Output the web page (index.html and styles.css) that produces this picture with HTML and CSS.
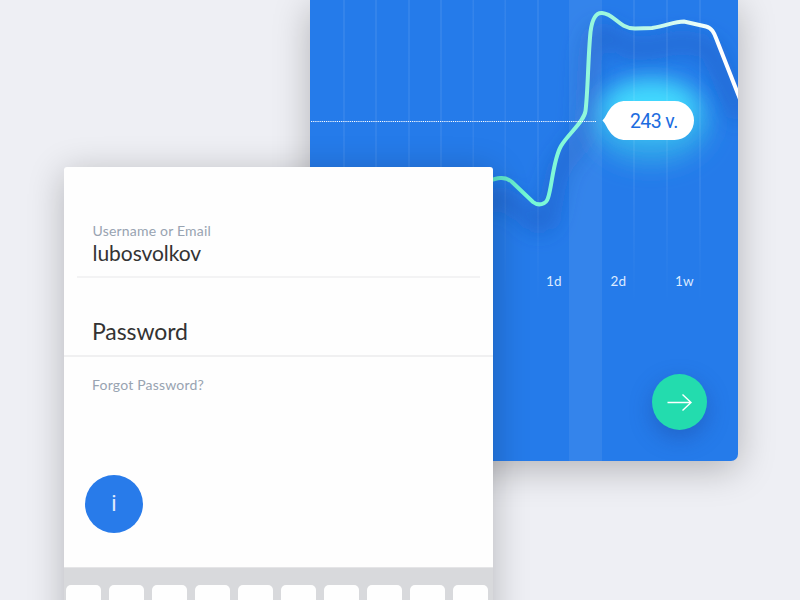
FILE: index.html
```html
<!DOCTYPE html>
<html lang="en">
<head>
<meta charset="utf-8">
<title>Sign in</title>
<link rel="stylesheet" href="styles.css">
</head>
<body>
<main class="stage">
  <section class="chart-card">
    <svg class="chart" width="428" height="461" viewBox="310 0 428 461">
      <defs>
        <linearGradient id="stroke" gradientUnits="userSpaceOnUse" x1="480" y1="0" x2="720" y2="0">
          <stop offset="0" stop-color="#4fd8c0"/>
          <stop offset=".2" stop-color="#74f8d5"/>
          <stop offset=".35" stop-color="#84f9d9"/>
          <stop offset=".6" stop-color="#a8f6e0"/>
          <stop offset=".8" stop-color="#d4fbf0"/>
          <stop offset="1" stop-color="#fff"/>
        </linearGradient>
        <linearGradient id="fade" gradientUnits="userSpaceOnUse" x1="0" y1="0" x2="0" y2="305">
          <stop offset="0" stop-color="#fff" stop-opacity=".07"/>
          <stop offset=".6" stop-color="#fff" stop-opacity=".06"/>
          <stop offset="1" stop-color="#fff" stop-opacity="0"/>
        </linearGradient>
        <filter id="soft" filterUnits="userSpaceOnUse" x="280" y="-60" width="520" height="400"><feGaussianBlur stdDeviation="11"/></filter>
        <filter id="halo" filterUnits="userSpaceOnUse" x="540" y="20" width="240" height="220"><feGaussianBlur stdDeviation="12"/></filter>
      </defs>
      <path transform="translate(0 20)" d="M480 184C493 180 503 174 512 182L533 202C538 206 546 205 548 198C552 187 553 160 561 146C568 134 584 122 585.500 111C588 91 588 57 590.500 32C592 20 596 12.500 602 13C615 14 618 28 635 28.500L652 28C666 26 674 21.500 684 21.500L706 26.500C712 28 714 33 716 38L740 99" fill="none" stroke="#1c50b0" stroke-opacity=".6" stroke-width="12" filter="url(#soft)"/>
      <ellipse cx="651" cy="124" rx="59" ry="40" fill="#32a5ea" filter="url(#halo)"/>
      <ellipse cx="651" cy="107" rx="46" ry="26" fill="#42daff" filter="url(#halo)"/>
      <rect x="569" y="0" width="33" height="461" fill="#fff" opacity=".07"/>
      <g fill="url(#fade)">
        <rect x="343" y="0" width="2" height="305"/>
        <rect x="375" y="0" width="2" height="305"/>
        <rect x="408" y="0" width="2" height="305"/>
        <rect x="440" y="0" width="2" height="305"/>
        <rect x="472.500" y="0" width="1.500" height="305"/>
        <rect x="504.500" y="0" width="1.500" height="305"/>
        <rect x="537" y="0" width="2" height="305"/>
        <rect x="633" y="0" width="2" height="305"/>
        <rect x="666" y="0" width="2" height="305"/>
        <rect x="699" y="0" width="2" height="305"/>
      </g>
      <path d="M480 184C493 180 503 174 512 182L533 202C538 206 546 205 548 198C552 187 553 160 561 146C568 134 584 122 585.500 111C588 91 588 57 590.500 32C592 20 596 12.500 602 13C615 14 618 28 635 28.500L652 28C666 26 674 21.500 684 21.500L706 26.500C712 28 714 33 716 38L740 99" fill="none" stroke="url(#stroke)" stroke-width="4"/>
      <path d="M311 121.500H596" stroke="#fff" stroke-width="1.200" stroke-dasharray="1.200 0.950"/>
    </svg>
    <div class="value">
      <svg class="value-shape" width="92" height="39" viewBox="0 0 92 39"><path d="M0.500 19.500C4 16 5 11.500 8 8C12 2.500 17 0 24 0H72.500A19.500 19.500 0 0 1 72.500 39H24C17 39 12 36.500 8 31C5 27.500 4 23 0.500 19.500Z" fill="#fff"/></svg>
      <span class="value-text">243 v.</span>
    </div>
    <div class="ranges"><span>1d</span><span>2d</span><span>1w</span></div>
    <button class="next" aria-label="Next">
      <svg width="26" height="18" viewBox="0 0 26 18" fill="none" stroke="#fff" stroke-width="1.400"><path d="M.5 9.500H24M15.500 1.500L24 9.500L15.500 17.500"/></svg>
    </button>
  </section>

  <section class="login-card">
    <div class="field user">
      <div class="label">Username or Email</div>
      <div class="username">lubosvolkov</div>
    </div>
    <div class="field password">Password</div>
    <div class="forgot">Forgot Password?</div>
    <div class="info">i</div>
    <div class="keyboard">
      <i class="key"></i><i class="key"></i><i class="key"></i><i class="key"></i><i class="key"></i><i class="key"></i><i class="key"></i><i class="key"></i><i class="key"></i><i class="key"></i>
    </div>
  </section>
</main>
</body>
</html>
```

FILE: styles.css
```css
* { box-sizing: border-box; }
body { margin: 0; font-family: Lato, "Liberation Sans", sans-serif; }
.stage {
  display: grid;
  width: 800px;
  height: 600px;
  overflow: hidden;
  background: #eeeff4;
}
.chart-card, .login-card { grid-area: 1 / 1; }
.chart-card {
  position: relative;
  width: 428px;
  height: 461px;
  margin-left: 310px;
  border-radius: 0 0 7px 7px;
  background: #257bea;
  box-shadow: 0 8px 36px rgba(0, 0, 0, .25);
}
.chart { display: block; border-radius: 0 0 7px 7px; }
.value {
  position: absolute;
  left: 292px;
  top: 101px;
  width: 92px;
  height: 39px;
}
.value-shape { display: block; }
.value-text {
  position: absolute;
  left: 28px;
  top: 1px;
  font: 19.5px/40px Roboto, sans-serif;
  letter-spacing: -.6px;
  color: #1c6ce0;
  white-space: nowrap;
}
.ranges {
  position: absolute;
  left: 236px;
  top: 273px;
  display: grid;
  grid-template-columns: repeat(3, 64.5px);
  font-size: 13.5px;
  line-height: 17px;
  letter-spacing: .2px;
  color: #dceaff;
}
.next {
  position: absolute;
  left: 342px;
  top: 374px;
  display: flex;
  align-items: center;
  justify-content: center;
  width: 55px;
  height: 56px;
  padding: 0;
  border: 0;
  border-radius: 50%;
  background: #23dcae;
  box-shadow: 0 8px 22px rgba(28, 65, 150, .4);
}
.login-card {
  position: relative;
  display: flex;
  flex-direction: column;
  width: 429px;
  height: 480px;
  margin: 167px 0 0 64px;
  border-radius: 3px;
  background: #fefefe;
  box-shadow: 0 6px 36px rgba(0, 0, 0, .24);
}
.login-card > * { flex: none; }
.user {
  height: 111px;
  margin: 0 13px;
  padding: 55px 0 0 15.5px;
  border-bottom: 2px solid #f3f3f4;
}
.label, .forgot {
  font-size: 14px;
  line-height: 18px;
  color: #98a3b1;
  letter-spacing: .2px;
}
.username { font-size: 21px; line-height: 25px; letter-spacing: -.05px; color: #333; }
.password {
  height: 79px;
  padding: 39px 0 0 28px;
  border-bottom: 2px solid #f0f0f1;
  font-size: 23px;
  line-height: 29px;
  letter-spacing: -.1px;
  color: #333;
}
.forgot { padding: 19px 0 0 28px; }
.info {
  width: 58px;
  height: 58px;
  margin: 81px 0 34px 21px;
  border-radius: 50%;
  background: #287bea;
  color: #e2edfc;
  font: 22px/58px Roboto, sans-serif;
  text-align: center;
}
.keyboard {
  display: flex;
  gap: 8px;
  padding: 17px 2px 0;
  border-top: 1px solid #e5e5e7;
  background: #d8d9dc;
}
.key {
  flex: none;
  width: 35px;
  height: 60px;
  border-radius: 5px;
  background: #fefefe;
}
```
